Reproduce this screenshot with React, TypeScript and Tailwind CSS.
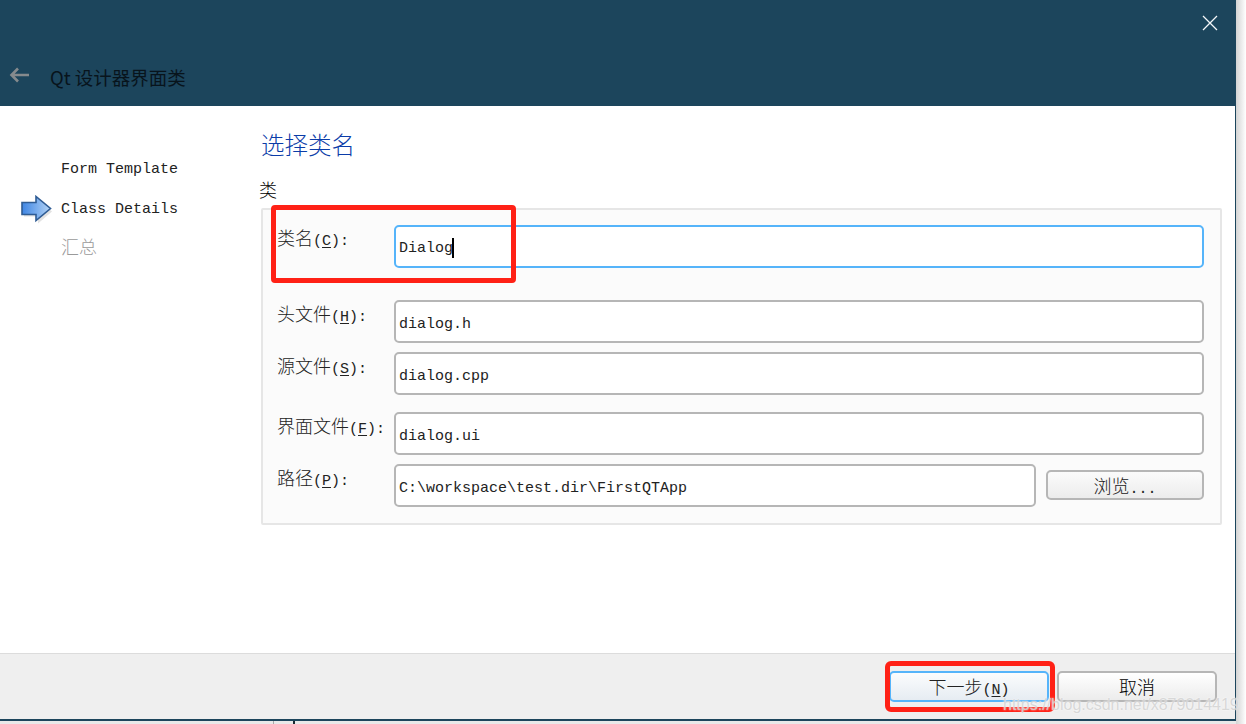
import type { ReactNode } from "react";

const mono = "font-['Liberation_Mono','Noto_Sans_CJK_SC',monospace]";
const cjk = "font-['Noto_Sans_CJK_SC',sans-serif] text-[18px] font-light";

function Han({ children }: { children: ReactNode }) {
    return <span className={cjk}>{children}</span>;
}

function FieldLabel({ name, letter }: { name: string; letter: string }) {
    return (
        <div className={`${mono} w-[117px] shrink-0 whitespace-nowrap text-[15px] leading-[22px] text-[#222]`}>
            <Han>{name}</Han>(<span className="underline underline-offset-2">{letter}</span>):
        </div>
    );
}

function TextBox({ value, focused }: { value: string; focused?: boolean }) {
    return (
        <div
            className={`${mono} flex h-[43px] flex-1 items-center rounded-[5px] border-2 bg-white pl-[3px] text-[15px] text-[#222] ${focused ? "border-[#55b4fa] pt-[6px]" : "border-[#b6b6b6] pt-[8px]"}`}
        >
            {value}
            {focused && <span className="-mt-[4px] -ml-[1px] h-[20px] w-[2px] bg-black" />}
        </div>
    );
}

function Row({ name, letter, value, focused, className }: { name: string; letter: string; value: string; focused?: boolean; className: string }) {
    return (
        <div className={`flex items-start ${className}`}>
            <div className={focused ? "pt-[1px]" : "pt-[2px]"}>
                <FieldLabel name={name} letter={letter} />
            </div>
            <TextBox value={value} focused={focused} />
        </div>
    );
}

export default function App() {
    return (
        <div className="relative flex h-[724px] w-[1246px] overflow-hidden bg-white">
            <div className="flex w-[1236px] shrink-0 flex-col">
                <div className="flex h-[721px] flex-col border-r border-b-2 border-[#1c455c]">
                    <header className="flex h-[106px] shrink-0 flex-col bg-[#1c455c]">
                        <div className="flex justify-end pt-[15px] pr-[17px]">
                            <svg width="16" height="16" viewBox="0 0 16 16" fill="none" stroke="#f4f7f9" strokeWidth="1.3">
                                <path d="M1 1 L15 15 M15 1 L1 15" />
                            </svg>
                        </div>
                        <div className="mt-[29px] flex items-center pl-[9px]">
                            <svg width="20" height="16" viewBox="0 0 20 16" fill="none" stroke="#858a8d" strokeWidth="2.6">
                                <path d="M9 1.5 L2.5 8 L9 14.5 M2.5 8 H20" />
                            </svg>
                            <span className="ml-[21px] pt-[4px] font-['Noto_Sans_CJK_SC',sans-serif] text-[18.5px] leading-[26px] text-[#08141c]">
                                Qt 设计器界面类
                            </span>
                        </div>
                    </header>

                    <div className="flex min-h-0 flex-1">
                        <aside className="w-[261px] shrink-0 pt-[53px]">
                            <div className={`${mono} pl-[61px] text-[15px] leading-[22px] text-[#222]`}>Form Template</div>
                            <div className="mt-[14px] flex items-center pl-[21px]">
                                <svg width="33" height="29" viewBox="0 0 33 29" className="mr-[7px]">
                                    <defs>
                                        <linearGradient id="arrowFill" x1="0" y1="0" x2="1" y2="0">
                                            <stop offset="0" stopColor="#3f86e4" />
                                            <stop offset="1" stopColor="#b3d3f5" />
                                        </linearGradient>
                                    </defs>
                                    <path d="M2 10 H16 V3 L30 15 L16 27 V20 H2 Z" fill="#cfcfcf" opacity="0.6" transform="translate(1 1.5)" />
                                    <path d="M1 7.5 H15 V1.5 L29.5 13.5 L15 25.5 V19.5 H1 Z" fill="url(#arrowFill)" stroke="#2f5c94" strokeWidth="1.6" />
                                </svg>
                                <span className={`${mono} text-[15px] leading-[22px] text-[#222]`}>Class Details</span>
                            </div>
                            <div className="mt-[11px] pl-[61px] font-['Noto_Sans_CJK_SC',sans-serif] text-[18px] font-light leading-[22px] text-[#9a9a9a]">汇总</div>
                        </aside>

                        <main className="flex-1 pr-[13px]">
                            <h1 className="mt-[23px] font-['Noto_Sans_CJK_SC',sans-serif] text-[23.5px] font-light leading-[30px] text-[#0b3ca8]">选择类名</h1>
                            <div className="mt-[19px] -ml-[2px] font-['Noto_Sans_CJK_SC',sans-serif] text-[18px] font-light leading-[22px] text-black">类</div>
                            <section className="mt-[8px] h-[317px] rounded-[2px] border-2 border-[#e6e6e6] bg-[#fbfbfb] pt-[15px] pr-[16px] pl-[14px]">
                                <Row name="类名" letter="C" value="Dialog" focused className="h-[41px]" />
                                <Row name="头文件" letter="H" value="dialog.h" className="mt-[34px]" />
                                <Row name="源文件" letter="S" value="dialog.cpp" className="mt-[9px]" />
                                <Row name="界面文件" letter="F" value="dialog.ui" className="mt-[17px]" />
                                <div className="mt-[9px] flex items-start">
                                    <div className="pt-[2px]">
                                        <FieldLabel name="路径" letter="P" />
                                    </div>
                                    <TextBox value="C:\workspace\test.dir\FirstQTApp" />
                                    <button className={`${mono} mt-[6px] ml-[10px] h-[30px] w-[158px] rounded-[5px] border-2 border-[#b6b6b6] bg-gradient-to-b from-[#fbfbfb] to-[#ececec] pb-[2px] text-[15px] text-[#222]`}>
                                        <Han>浏览</Han>...
                                    </button>
                                </div>
                            </section>
                        </main>
                    </div>

                    <footer className="flex h-[66px] shrink-0 items-start justify-end gap-[8px] border-t border-[#dcdcdc] bg-[#efefef] pt-[17px] pr-[18px]">
                        <button className={`${mono} h-[31px] w-[160px] rounded-[5px] border-2 border-[#55b4fa] bg-gradient-to-b from-[#fbfcfd] to-[#e6ecf2] text-[15px] text-[#222]`}>
                            <Han>下一步</Han>(<span className="underline underline-offset-2">N</span>)
                        </button>
                        <button className="h-[31px] w-[160px] rounded-[5px] border-2 border-[#b6b6b6] bg-gradient-to-b from-white to-[#ececec] font-['Noto_Sans_CJK_SC',sans-serif] text-[18px] font-light text-black">
                            取消
                        </button>
                    </footer>
                </div>
                <div className="relative flex-1 bg-[#e9e9e9]">
                    <div className="absolute top-0 bottom-0 left-[273px] w-px bg-[#a8a8a8]" />
                    <div className="absolute top-0 bottom-0 left-[293px] w-[2px] bg-[#1a2a33]" />
                </div>
            </div>
            <div className="flex-1 bg-gradient-to-r from-[#d4d4d4] to-white" />

            <div className="absolute top-[205px] left-[271px] h-[78px] w-[245px] rounded-[4px] border-[5px] border-[#ff2116]" />
            <div className="absolute top-[661px] left-[885px] h-[51px] w-[170px] rounded-[6px] border-[5px] border-[#ff2116]" />
            <div className="absolute top-[693px] left-[1003px] font-['Liberation_Sans',sans-serif] text-[16px] leading-[24px] whitespace-nowrap text-[#cfcfcf]/80 [text-shadow:0_0_2px_#ffffff]">
                https://blog.csdn.net/x879014419
            </div>
        </div>
    );
}
